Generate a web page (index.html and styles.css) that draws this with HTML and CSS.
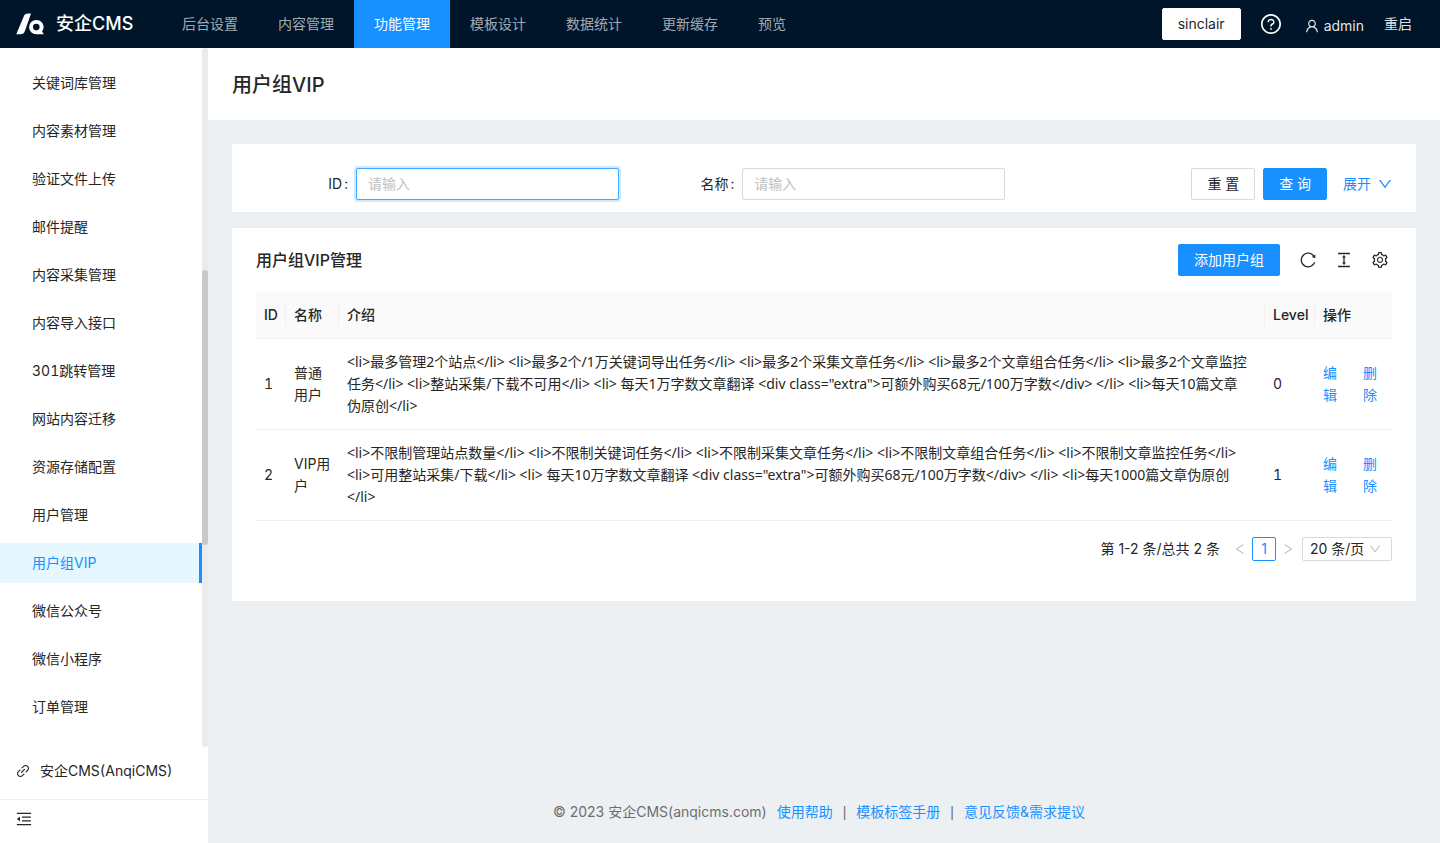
FILE: index.html
```html
<!DOCTYPE html>
<html lang="zh-CN">
<head>
<meta charset="utf-8">
<meta name="viewport" content="width=device-width, initial-scale=1">
<title>用户组VIP - 安企CMS</title>
<link rel="stylesheet" href="styles.css">
</head>
<body>
<div class="app">
  <header class="topbar">
    <a class="brand" href="#">
      <svg class="brand-logo" viewBox="0 0 28 24" aria-hidden="true"><path d="M7.500 5C8.600 2.600 10 1.600 12.200 1.600H15L9 18.800C8 21.400 6.900 22.300 4.500 22.300H0.300z"/><path fill-rule="evenodd" d="M20.300 7.900a7.200 7.200 0 0 1 5.800 11.500L27.800 22.300H20.300a7.200 7.200 0 0 1 0-14.400zM20.300 11.800a3.300 3.300 0 1 0 0 6.600a3.300 3.300 0 0 0 0-6.600z"/></svg>
      <span>安企CMS</span>
    </a>
    <nav class="topnav">
      <a href="#">后台设置</a>
      <a href="#">内容管理</a>
      <a class="is-active" href="#">功能管理</a>
      <a href="#">模板设计</a>
      <a href="#">数据统计</a>
      <a href="#">更新缓存</a>
      <a href="#">预览</a>
    </nav>
    <div class="tools">
      <button class="btn site-btn" type="button">sinclair</button>
      <a class="help" href="#" aria-label="帮助"><svg class="icon icon-20" viewBox="64 64 896 896"><path d="M512 64C264.600 64 64 264.600 64 512s200.600 448 448 448 448-200.600 448-448S759.400 64 512 64zm0 820c-205.400 0-372-166.600-372-372s166.600-372 372-372 372 166.600 372 372-166.600 372-372 372z"/><path d="M623.600 316.700C593.600 290.400 554 276 512 276s-81.600 14.500-111.600 40.700C369.200 344 352 380.700 352 420v7.600c0 4.400 3.600 8 8 8h48c4.400 0 8-3.600 8-8V420c0-44.100 43.100-80 96-80s96 35.900 96 80c0 31.100-22 59.600-56.100 72.700-21.200 8.100-39.200 22.300-52.100 40.900-13.100 19-19.900 41.800-19.900 64.900V620c0 4.400 3.600 8 8 8h48c4.400 0 8-3.600 8-8v-22.700a48.300 48.300 0 0130.900-44.800c59-22.700 97.100-74.700 97.100-132.500.1-39.300-17.100-76-48.300-103.300zM472 732a40 40 0 1080 0 40 40 0 10-80 0z"/></svg></a>
      <a class="account" href="#"><svg class="icon icon-14" viewBox="64 64 896 896"><path d="M858.500 763.600a374 374 0 00-80.600-119.500 375.630 375.630 0 00-119.500-80.600c-.4-.2-.8-.3-1.200-.5C719.500 518 760 444.700 760 362c0-137-111-248-248-248S264 225 264 362c0 82.700 40.500 156 102.800 201.100-.4.2-.8.3-1.200.5-44.800 18.900-85 46-119.500 80.600a375.630 375.630 0 00-80.600 119.500A371.700 371.700 0 00136 901.800a8 8 0 008 8.200h60c4.400 0 7.900-3.500 8-7.800 2-77.200 33-149.500 87.800-204.300 56.700-56.700 132-87.900 212.200-87.900s155.500 31.200 212.200 87.900C779 752.700 810 825 812 902.200c.1 4.400 3.600 7.800 8 7.800h60a8 8 0 008-8.200c-1-47.800-10.900-94.300-29.500-138.200zM512 534c-45.900 0-89.100-17.900-121.600-50.400S340 407.900 340 362c0-45.900 17.900-89.100 50.400-121.600S466.100 190 512 190s89.100 17.900 121.600 50.400S684 316.100 684 362c0 45.900-17.900 89.100-50.400 121.600S557.900 534 512 534z"/></svg><span>admin</span></a>
      <a class="restart" href="#">重启</a>
    </div>
  </header>

  <div class="body">
    <aside class="sidebar">
      <div class="side-scroll">
        <nav class="sidenav">
          <a href="#">关键词库管理</a>
          <a href="#">内容素材管理</a>
          <a href="#">验证文件上传</a>
          <a href="#">邮件提醒</a>
          <a href="#">内容采集管理</a>
          <a href="#">内容导入接口</a>
          <a href="#">301跳转管理</a>
          <a href="#">网站内容迁移</a>
          <a href="#">资源存储配置</a>
          <a href="#">用户管理</a>
          <a class="is-active" href="#">用户组VIP</a>
          <a href="#">微信公众号</a>
          <a href="#">微信小程序</a>
          <a href="#">订单管理</a>
        </nav>
        <div class="track"><div class="thumb"></div></div>
      </div>
      <a class="side-link" href="#"><svg class="icon icon-14" viewBox="64 64 896 896"><path d="M574 665.400a8.030 8.030 0 00-11.300 0L446.500 781.600c-53.800 53.800-144.600 59.500-204 0-59.500-59.500-53.800-150.200 0-204l116.200-116.200c3.100-3.100 3.100-8.200 0-11.300l-39.800-39.800a8.030 8.030 0 00-11.300 0L191.400 526.500c-84.600 84.600-84.600 221.500 0 306s221.500 84.600 306 0l116.200-116.200c3.100-3.100 3.100-8.200 0-11.300L574 665.400zm258.600-474c-84.600-84.600-221.500-84.600-306 0L410.300 307.600a8.030 8.030 0 000 11.300l39.700 39.700c3.100 3.100 8.200 3.100 11.300 0l116.200-116.200c53.800-53.800 144.600-59.500 204 0 59.500 59.500 53.800 150.200 0 204L665.300 562.600a8.030 8.030 0 000 11.300l39.800 39.800c3.100 3.100 8.200 3.100 11.300 0l116.200-116.200c84.500-84.600 84.500-221.500 0-306.100zM610.100 372.300a8.030 8.030 0 00-11.300 0L372.300 598.700a8.030 8.030 0 000 11.300l39.600 39.600c3.100 3.100 8.200 3.100 11.300 0l226.400-226.400c3.100-3.100 3.100-8.200 0-11.300l-39.500-39.600z"/></svg><span>安企CMS(AnqiCMS)</span></a>
      <button class="fold" type="button" aria-label="收起菜单"><svg class="icon icon-16" viewBox="64 64 896 896"><path d="M408 442h480c4.400 0 8-3.600 8-8v-56c0-4.400-3.600-8-8-8H408c-4.400 0-8 3.600-8 8v56c0 4.400 3.600 8 8 8zm-8 204c0 4.400 3.600 8 8 8h480c4.400 0 8-3.600 8-8v-56c0-4.400-3.600-8-8-8H408c-4.400 0-8 3.600-8 8v56zm504-486H120c-4.400 0-8 3.600-8 8v56c0 4.400 3.600 8 8 8h784c4.400 0 8-3.600 8-8v-56c0-4.400-3.600-8-8-8zm0 632H120c-4.400 0-8 3.600-8 8v56c0 4.400 3.600 8 8 8h784c4.400 0 8-3.600 8-8v-56c0-4.400-3.600-8-8-8zM115.400 518.900L271.700 642c5.800 4.600 14.400.5 14.400-6.900V388.900c0-7.400-8.500-11.500-14.400-6.900L115.400 505.100a8.740 8.740 0 000 13.800z"/></svg></button>
    </aside>

    <div class="page">
      <div class="page-head"><h1>用户组VIP</h1></div>
      <main class="content">
        <form class="card search">
          <div class="field"><label for="f-id">ID</label><input class="is-focused" id="f-id" type="text" placeholder="请输入"></div>
          <div class="field"><label for="f-name">名称</label><input id="f-name" type="text" placeholder="请输入"></div>
          <div class="actions">
            <button class="btn" type="reset">重 置</button>
            <button class="btn btn-primary" type="button">查 询</button>
            <a class="expand" href="#">展开<svg class="icon icon-14" viewBox="64 64 896 896"><path d="M884 256h-75c-5.100 0-9.900 2.500-12.900 6.600L512 654.200 227.900 262.600c-3-4.100-7.800-6.600-12.900-6.600h-75c-6.500 0-10.300 7.400-6.500 12.700l352.600 486.100c12.800 17.600 39 17.600 51.700 0l352.600-486.100c3.900-5.300.1-12.700-6.400-12.700z"/></svg></a>
          </div>
        </form>

        <section class="card list">
          <div class="list-head">
            <h2>用户组VIP管理</h2>
            <div class="list-tools">
              <button class="btn btn-primary" type="button">添加用户组</button>
              <button class="icon-btn" type="button" aria-label="刷新"><svg class="icon icon-16" viewBox="64 64 896 896"><path d="M909.100 209.300l-56.400 44.100C775.800 155.100 656.200 92 521.900 92 290 92 102.300 279.500 102 511.500 101.700 743.700 289.800 932 521.900 932c181.300 0 335.800-115 394.600-276.100 1.500-4.200-.7-8.900-4.900-10.300l-56.700-19.500a8 8 0 00-10.100 4.800c-1.800 5-3.800 10-5.900 14.900-17.300 41-42.100 77.800-73.700 109.400A344.770 344.770 0 01655.900 829c-42.300 17.900-87.400 27-133.800 27-46.500 0-91.500-9.100-133.800-27A341.500 341.500 0 01279 755.200a342.160 342.160 0 01-73.700-109.400c-17.900-42.400-27-87.400-27-133.900s9.100-91.500 27-133.900c17.300-41 42.100-77.800 73.700-109.400 31.600-31.600 68.400-56.400 109.300-73.800 42.300-17.900 87.400-27 133.800-27 46.500 0 91.500 9.100 133.800 27a341.500 341.500 0 01109.300 73.800c9.900 9.900 19.200 20.400 27.800 31.400l-60.200 47a8 8 0 003 14.100l175.600 43c5 1.200 9.900-2.600 9.900-7.700l.8-180.900c-.1-6.600-7.800-10.300-13-6.200z"/></svg></button>
              <button class="icon-btn" type="button" aria-label="密度"><svg class="icon icon-16" viewBox="64 64 896 896"><path d="M840 836H184c-4.400 0-8 3.600-8 8v60c0 4.400 3.600 8 8 8h656c4.400 0 8-3.600 8-8v-60c0-4.400-3.600-8-8-8zm0-724H184c-4.400 0-8 3.600-8 8v60c0 4.400 3.600 8 8 8h656c4.400 0 8-3.600 8-8v-60c0-4.400-3.600-8-8-8zM610.800 378c6 0 9.400-7 5.700-11.700L515.700 238.700a7.140 7.140 0 00-11.300 0L403.600 366.300a7.230 7.230 0 005.700 11.700H476v268h-62.800c-6 0-9.400 7-5.700 11.700l100.800 127.500c2.900 3.700 8.500 3.700 11.300 0l100.800-127.500c3.700-4.700.4-11.700-5.700-11.700H548V378h62.800z"/></svg></button>
              <button class="icon-btn" type="button" aria-label="列设置"><svg class="icon icon-16" viewBox="64 64 896 896"><path d="M924.800 625.700l-65.500-56c3.100-19 4.700-38.400 4.700-57.800s-1.600-38.800-4.700-57.800l65.500-56a32.030 32.030 0 009.300-35.200l-.9-2.600a443.740 443.740 0 00-79.700-137.900l-1.800-2.100a32.120 32.120 0 00-35.100-9.500l-81.300 28.900c-30-24.600-63.500-44-99.700-57.600l-15.700-85a32.050 32.050 0 00-25.800-25.700l-2.700-.5c-52.100-9.400-106.900-9.400-159 0l-2.700.5a32.050 32.050 0 00-25.800 25.700l-15.800 85.400a351.860 351.860 0 00-99 57.400l-81.900-29.100a32 32 0 00-35.100 9.500l-1.800 2.100a446.020 446.020 0 00-79.700 137.900l-.9 2.600c-4.500 12.500-.8 26.500 9.300 35.200l66.300 56.600c-3.100 18.800-4.600 38-4.600 57.100 0 19.200 1.500 38.400 4.600 57.100L99 625.500a32.030 32.030 0 00-9.300 35.200l.9 2.600c18.100 50.400 44.900 96.900 79.700 137.900l1.800 2.100a32.120 32.120 0 0035.100 9.500l81.900-29.100c29.800 24.500 63.100 43.900 99 57.400l15.800 85.400a32.050 32.050 0 0025.800 25.700l2.700.5a449.400 449.400 0 00159 0l2.700-.5a32.050 32.050 0 0025.800-25.700l15.700-85a350 350 0 0099.700-57.600l81.300 28.900a32 32 0 0035.100-9.500l1.800-2.100c34.800-41.100 61.600-87.500 79.700-137.900l.9-2.600c4.500-12.300.8-26.300-9.300-35zM788.300 465.900c2.500 15.100 3.800 30.600 3.800 46.100s-1.300 31-3.800 46.100l-6.600 40.100 74.700 63.900a370.030 370.030 0 01-42.600 73.600L721 702.800l-31.400 25.800c-23.900 19.600-50.500 35-79.300 45.800l-38.100 14.300-17.900 97a377.500 377.500 0 01-85 0l-17.900-97.200-37.800-14.500c-28.500-10.800-55-26.200-78.700-45.700l-31.400-25.900-93.400 33.200c-17-22.900-31.200-47.600-42.600-73.600l75.500-64.500-6.500-40c-2.400-14.900-3.700-30.300-3.700-45.500 0-15.300 1.200-30.600 3.700-45.500l6.500-40-75.500-64.500c11.300-26.100 25.600-50.700 42.600-73.600l93.400 33.200 31.400-25.900c23.700-19.500 50.200-34.900 78.700-45.700l37.900-14.300 17.900-97.200c28.100-3.200 56.800-3.200 85 0l17.900 97 38.100 14.300c28.700 10.800 55.400 26.200 79.300 45.800l31.400 25.800 92.800-32.900c17 22.900 31.200 47.600 42.600 73.600L781.800 426l6.500 39.900zM512 326c-97.200 0-176 78.800-176 176s78.800 176 176 176 176-78.800 176-176-78.800-176-176-176zm79.200 255.200A111.600 111.600 0 01512 614c-29.900 0-58-11.700-79.200-32.800A111.600 111.600 0 01400 502c0-29.900 11.700-58 32.800-79.200C454 401.600 482.100 390 512 390c29.900 0 58 11.600 79.200 32.800A111.600 111.600 0 01624 502c0 29.900-11.700 58-32.800 79.200z"/></svg></button>
            </div>
          </div>

          <table class="table">
            <colgroup><col class="c-id"><col class="c-name"><col><col class="c-level"><col class="c-ops"></colgroup>
            <thead>
              <tr><th scope="col"><span>ID</span></th><th scope="col"><span>名称</span></th><th scope="col"><span>介绍</span></th><th scope="col"><span>Level</span></th><th scope="col"><span class="no-rule">操作</span></th></tr>
            </thead>
            <tbody>
              <tr>
                <td>1</td>
                <td>普通用户</td>
                <td class="intro">&lt;li&gt;最多管理2个站点&lt;/li&gt; &lt;li&gt;最多2个/1万关键词导出任务&lt;/li&gt; &lt;li&gt;最多2个采集文章任务&lt;/li&gt; &lt;li&gt;最多2个文章组合任务&lt;/li&gt; &lt;li&gt;最多2个文章监控任务&lt;/li&gt; &lt;li&gt;整站采集/下载不可用&lt;/li&gt; &lt;li&gt; 每天1万字数文章翻译 &lt;div class="extra"&gt;可额外购买68元/100万字数&lt;/div&gt; &lt;/li&gt; &lt;li&gt;每天10篇文章伪原创&lt;/li&gt;</td>
                <td>0</td>
                <td><div class="ops"><a href="#">编辑</a><a href="#">删除</a></div></td>
              </tr>
              <tr>
                <td>2</td>
                <td>VIP用户</td>
                <td class="intro">&lt;li&gt;不限制管理站点数量&lt;/li&gt; &lt;li&gt;不限制关键词任务&lt;/li&gt; &lt;li&gt;不限制采集文章任务&lt;/li&gt; &lt;li&gt;不限制文章组合任务&lt;/li&gt; &lt;li&gt;不限制文章监控任务&lt;/li&gt; &lt;li&gt;可用整站采集/下载&lt;/li&gt; &lt;li&gt; 每天10万字数文章翻译 &lt;div class="extra"&gt;可额外购买68元/100万字数&lt;/div&gt; &lt;/li&gt; &lt;li&gt;每天1000篇文章伪原创&lt;/li&gt;</td>
                <td>1</td>
                <td><div class="ops"><a href="#">编辑</a><a href="#">删除</a></div></td>
              </tr>
            </tbody>
          </table>

          <div class="pager">
            <span class="total">第 1-2 条/总共 2 条</span>
            <button class="arrow" type="button" aria-label="上一页" disabled><svg class="icon" viewBox="0 0 12 12"><path class="line" d="M9.500 1.500L2.500 6l7 4.500"/></svg></button>
            <button class="current" type="button">1</button>
            <button class="arrow" type="button" aria-label="下一页" disabled><svg class="icon" viewBox="0 0 12 12"><path class="line" d="M2.500 1.500l7 4.500l-7 4.500"/></svg></button>
            <div class="size">
              <select aria-label="每页条数"><option>20 条/页</option></select>
              <svg class="icon size-arrow" viewBox="64 64 896 896"><path d="M884 256h-75c-5.100 0-9.900 2.500-12.900 6.600L512 654.200 227.900 262.600c-3-4.100-7.800-6.600-12.900-6.600h-75c-6.500 0-10.300 7.400-6.500 12.700l352.600 486.100c12.800 17.600 39 17.600 51.700 0l352.600-486.100c3.900-5.300.1-12.700-6.400-12.700z"/></svg>
            </div>
          </div>
        </section>
      </main>
      <footer class="footer">
        <span>© 2023 安企CMS(anqicms.com)</span>
        <a href="#">使用帮助</a><span class="bar">|</span><a href="#">模板标签手册</a><span class="bar">|</span><a href="#">意见反馈&amp;需求提议</a>
      </footer>
    </div>
  </div>
</div>
</body>
</html>
```
FILE: styles.css
```css
* { box-sizing: border-box; }

body {
  margin: 0;
  font-family: Inter, "Noto Sans CJK SC", sans-serif;
  font-size: 14px;
  line-height: 22px;
  font-variant-numeric: tabular-nums;
  color: #262626;
  background: #edf0f3;
}

a { color: #1890ff; text-decoration: none; }
button, input, select { font: inherit; color: inherit; }
button { cursor: pointer; }
h1, h2 { margin: 0; font-weight: 500; }

.icon { display: block; width: 12px; height: 12px; fill: currentColor; flex: none; }
.icon-14 { width: 14px; height: 14px; }
.icon-16 { width: 16px; height: 16px; }
.icon-20 { width: 20px; height: 20px; }
.line { fill: none; stroke: currentColor; }

.app { display: flex; flex-direction: column; height: 100vh; }

/* Top bar */
.topbar { display: flex; align-items: center; height: 48px; flex: none; padding: 0 28px 0 16px; background: #001529; }
.brand { display: flex; align-items: center; gap: 12px; width: 146px; color: #fff; font-size: 18px; font-weight: 500; line-height: 32px; }
.brand-logo { width: 28px; height: 24px; fill: #fff; }
.topnav { display: flex; flex: 1; }
.topnav a { padding: 0 20px; line-height: 48px; color: rgba(255, 255, 255, 0.65); }
.topnav .is-active { color: #fff; background: #1890ff; }
.tools { display: flex; align-items: center; gap: 20px; }
.tools a { color: rgba(255, 255, 255, 0.9); }
.tools .help { color: #fff; }
.account { display: flex; align-items: center; gap: 5px; margin-left: 4px; padding-top: 4px; }

.btn { height: 32px; padding: 0 15px; border: 1px solid #d9d9d9; border-radius: 2px; background: #fff; }
.btn-primary { border-color: #1890ff; background: #1890ff; color: #fff; }
.site-btn { border-color: #fff; }

/* Sidebar */
.body { display: flex; flex: 1; min-height: 0; }
.sidebar { display: flex; flex-direction: column; width: 208px; flex: none; background: #fff; }
.side-scroll { display: flex; flex: 1; min-height: 0; }
.sidenav { display: flex; flex: 1; flex-direction: column; gap: 8px; padding-top: 15px; overflow: hidden; }
.sidenav a { flex: none; padding-left: 32px; line-height: 40px; color: #262626; }
.sidenav .is-active { color: #1890ff; background: #e6f7ff; border-right: 3px solid #1890ff; }
.track { width: 6px; padding-top: 222px; border-radius: 3px; background: #ebebeb; }
.thumb { height: 275px; border-radius: 3px; background: #c8c8c8; }
.side-link { display: flex; align-items: center; gap: 10px; height: 52px; padding: 0 16px 4px; color: #262626; }
.fold { display: flex; align-items: center; height: 44px; padding: 0 16px 6px; border: 0; border-top: 1px solid #f0f0f0; background: none; }

/* Page */
.page { display: flex; flex: 1; flex-direction: column; min-width: 0; overflow: auto; }
.page-head { padding: 21px 24px 19px; background: #fff; }
.page-head h1 { font-size: 20px; line-height: 32px; }
.content { display: flex; flex: 1; flex-direction: column; gap: 16px; padding: 24px; }
.card { background: #fff; }

.search { display: flex; padding: 24px 24px 12px; }
.field { display: flex; align-items: center; flex: 0 1 34%; }
.field label { flex: 0 0 100px; padding-right: 8px; text-align: right; }
.field label::after { content: ":"; margin-left: 2px; }
.field input { flex: 0 1 263px; min-width: 0; height: 32px; padding: 0 11px 2px; border: 1px solid #d9d9d9; border-radius: 2px; outline: 0; background: #fff; }
.field input::placeholder { color: #bfbfbf; }
.field .is-focused { border-color: #40a9ff; box-shadow: 0 0 0 2px rgba(24, 144, 255, 0.2); }
.actions { display: flex; align-items: center; gap: 8px; margin-left: auto; }
.expand { display: flex; align-items: center; gap: 7px; padding-left: 8px; }

.list { padding: 0 24px 40px; }
.list-head { display: flex; align-items: center; justify-content: space-between; padding: 16px 0; }
.list-head h2 { font-size: 16px; line-height: 24px; }
.list-tools { display: flex; align-items: center; gap: 20px; padding-right: 4px; }
.icon-btn { padding: 0; border: 0; background: none; }

.table { width: 100%; table-layout: fixed; border-collapse: collapse; }
.c-id { width: 30px; }
.c-name { width: 53px; }
.c-level { width: 50px; }
.c-ops { width: 77px; }
.table th { padding: 12px 0; font-weight: 500; text-align: left; background: #fafafa; border-bottom: 1px solid #f0f0f0; }
.table th span { display: block; padding-left: 8px; border-right: 1px solid #f0f0f0; }
.table th .no-rule { border-right: 0; }
.table td { padding: 12px 8px; border-bottom: 1px solid #f0f0f0; }
.table .intro { padding-right: 16px; font-family: "Noto Sans", "Noto Sans CJK SC", sans-serif; }
.ops { display: flex; gap: 26px; }
.ops a { width: 14px; }

.pager { display: flex; align-items: center; justify-content: flex-end; padding-top: 16px; font-variant-numeric: normal; }
.total { margin-right: 8px; }
.arrow { display: grid; place-items: center; width: 24px; height: 24px; padding: 0; border: 0; background: none; color: #b0b0b0; }
.current { width: 24px; height: 24px; padding: 0; border: 1px solid #1890ff; border-radius: 2px; background: #fff; color: #1890ff; }
.size { position: relative; margin-left: 2px; }
.size select { display: block; width: 90px; height: 24px; padding: 0 7px; border: 1px solid #d9d9d9; border-radius: 2px; background: #fff; appearance: none; }
.size-arrow { position: absolute; top: 6px; right: 11px; color: #bfbfbf; pointer-events: none; }

.footer { display: flex; justify-content: center; gap: 10px; padding: 0 10px 20px 0; color: #6b6e70; font-variant-numeric: normal; }
.bar { font-family: "Liberation Sans", sans-serif; }
```
